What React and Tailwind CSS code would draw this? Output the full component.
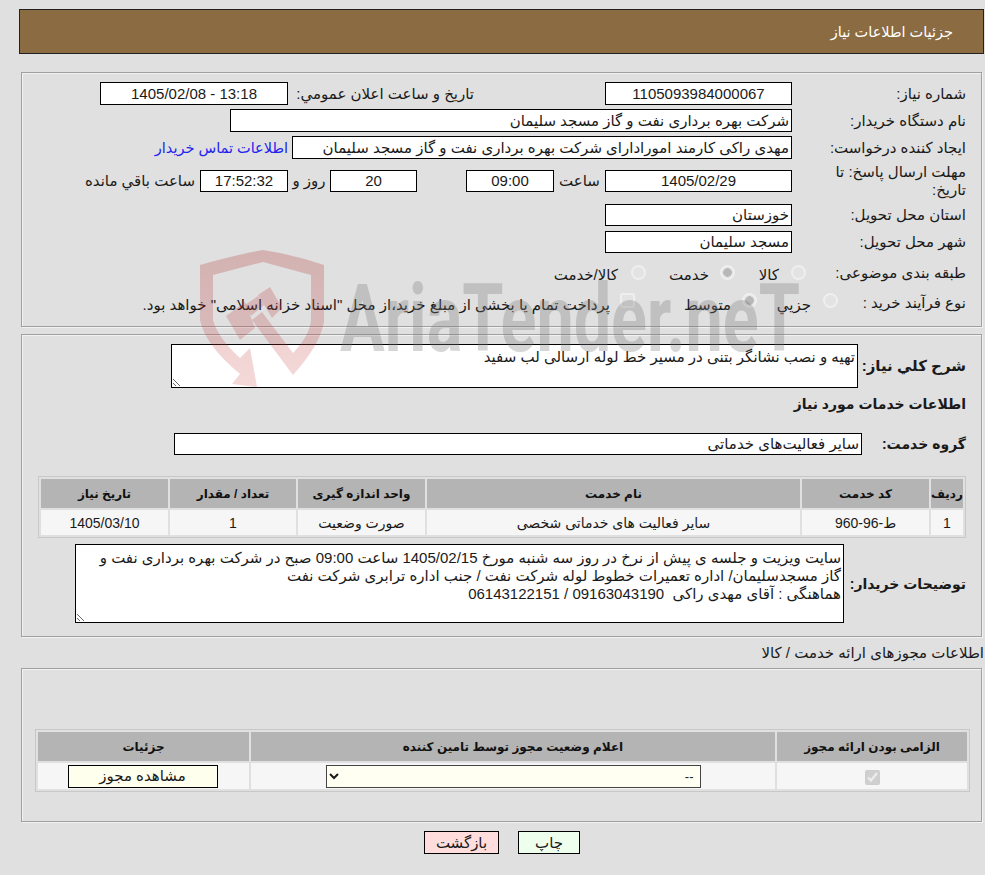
import React from 'react';

const Field = ({ className = '', children }) => (
  <div className={`flex h-full shrink-0 items-center border border-black bg-white px-[2px] ${className}`}>{children}</div>
);

const Label = ({ className = '', children }) => (
  <div className={`shrink-0 ${className}`}>{children}</div>
);

const radioClass = "m-0 -mt-[6px] h-[15px] w-[15px] appearance-none rounded-full border-2 border-[#efefef] bg-[#e3e3e3] checked:bg-[radial-gradient(circle,#b8b8b8_52%,#e3e3e3_58%)]";
const radioLowClass = "m-0 -mt-[10px] h-[15px] w-[15px] appearance-none rounded-full border-2 border-[#efefef] bg-[#e3e3e3] checked:bg-[radial-gradient(circle,#b8b8b8_52%,#e3e3e3_58%)]";

function Watermark() {
  return (
    <svg className="absolute left-0 top-0 pointer-events-none" width="985" height="875" viewBox="0 0 985 875">
      <defs>
        <linearGradient id="shieldFade" x1="0" y1="250" x2="0" y2="387" gradientUnits="userSpaceOnUse">
          <stop offset="0" stopColor="#b23a3a" stopOpacity="0.28" />
          <stop offset="1" stopColor="#c83c3c" stopOpacity="0.2" />
        </linearGradient>
      </defs>
      <g fill="url(#shieldFade)">
        <path d="M200 265 Q235 255 263 250 Q295 255 324 265 L324 322 Q320 345 293 375 L252 320 L262 312 L293 353 Q310 335 311 320 L311 275 Q285 268 263 262 Q240 268 213 275 L213 320 Q218 338 240 358 L250 348 L257 387 L232 384 L240 374 Q205 345 200 320 Z" />
        <path d="M258 295 L270 287 L282 308 L272 318 Z" />
        <path d="M226 316 L245 302 L255 328 L240 340 Z" />
        <path d="M245 305 L258 296 L264 305 L251 316 Z" />
      </g>
      <text x="340" y="351" direction="ltr" textAnchor="start" fontFamily="Roboto, sans-serif" fontWeight="700" fontSize="94" textLength="460" lengthAdjust="spacingAndGlyphs" fill="#777" fillOpacity="0.3">AriaTender.neT</text>
    </svg>
  );
}

const thClass = 'bg-[#b4b4b4] font-bold text-[12px] text-[#111] text-center';
const tdClass = 'bg-[#f6f6f6] text-center text-[14px]';
const panelShadow = 'shadow-[1px_1px_0_#f2f2f2,inset_1px_1px_0_#f2f2f2]';

export default function App() {
  return (
    <div dir="rtl" className="relative h-[875px] overflow-hidden bg-[#e0e0e0] pt-[9px] text-[15px] leading-[18px] text-[#1a1a1a] font-['Liberation_Sans','DejaVu_Sans',sans-serif]">
      <div className="ml-[19px] mr-px flex h-[45px] items-center border border-[#222] bg-[#8b6b41] pr-[30px] text-[14.5px] text-white">
        جزئیات اطلاعات نیاز
      </div>

      {/* main info */}
      <div className={`ml-[21px] mr-[3px] mt-[18px] h-[255px] border border-[#a0a0a0] pt-[9px] pr-[15px] ${panelShadow}`}>
        <div className="flex h-[23px] items-center">
          <Label className="w-[174px]">شماره نیاز:</Label>
          <Field className="w-[187px] justify-center">1105093984000067</Field>
          <Label className="mr-[131px] w-[186px]">تاریخ و ساعت اعلان عمومي:</Label>
          <Field className="w-[188px] justify-center">13:18 - 1405/02/08</Field>
        </div>
        <div className="mt-[4px] flex h-[23px] items-center">
          <Label className="w-[174px]">نام دستگاه خریدار:</Label>
          <Field className="w-[562px]">شرکت بهره برداری نفت و گاز مسجد سلیمان</Field>
        </div>
        <div className="mt-[4px] flex h-[23px] items-center">
          <Label className="w-[174px]">ایجاد کننده درخواست:</Label>
          <Field className="w-[500px]">مهدی راکی کارمند امورادارای شرکت بهره برداری نفت و گاز مسجد سلیمان</Field>
          <a className="mr-[4px] text-[14.5px] text-[#2222ee]">اطلاعات تماس خریدار</a>
        </div>
        <div className="mt-[11px] flex h-[22px] items-center">
          <Label className="w-[174px] pl-[36px]">مهلت ارسال پاسخ: تا تاریخ:</Label>
          <Field className="w-[187px] justify-center">1405/02/29</Field>
          <div className="w-[51px] shrink-0 text-center">ساعت</div>
          <Field className="w-[88px] justify-center">09:00</Field>
          <Field className="mr-[49px] w-[87px] justify-center">20</Field>
          <div className="w-[42px] shrink-0 text-center">روز و</div>
          <Field className="w-[88px] justify-center bg-[#fffff0]">17:52:32</Field>
          <div className="mr-[5px] shrink-0">ساعت باقي مانده</div>
        </div>
        <div className="mt-[12px] flex h-[22px] items-center">
          <Label className="w-[174px]">استان محل تحویل:</Label>
          <Field className="w-[187px]">خوزستان</Field>
        </div>
        <div className="mt-[5px] flex h-[22px] items-center">
          <Label className="w-[174px]">شهر محل تحویل:</Label>
          <Field className="w-[187px]">مسجد سلیمان</Field>
        </div>
        <div className="mt-[11px] flex h-[22px] items-center">
          <Label className="-mt-[4px] w-[160px]">طبقه بندی موضوعی:</Label>
          <div className="flex w-[71px] items-center gap-[12px]">
            <input type="radio" disabled className={radioClass} />
            <span>کالا</span>
          </div>
          <div className="flex w-[89px] items-center gap-[11px]">
            <input type="radio" disabled defaultChecked className={radioClass} />
            <span>خدمت</span>
          </div>
          <div className="flex items-center gap-[13px]">
            <input type="radio" disabled className={radioClass} />
            <span>کالا/خدمت</span>
          </div>
        </div>
        <div className="mt-[8px] flex h-[22px] items-center">
          <Label className="-mt-[4px] w-[128px]">نوع فرآیند خرید :</Label>
          <div className="flex w-[81px] items-center gap-[12px]">
            <input type="radio" disabled className={radioLowClass} />
            <span>جزیي</span>
          </div>
          <div className="flex w-[122px] items-center gap-[11px]">
            <input type="radio" disabled defaultChecked className={radioLowClass} />
            <span>متوسط</span>
          </div>
          <div className="flex items-center gap-[10px]">
            <input type="checkbox" disabled className="m-0 -mt-[10px] h-[15px] w-[15px] appearance-none rounded-[3px] border-2 border-[#efefef] bg-[#e3e3e3]" />
            <span className="whitespace-nowrap">پرداخت تمام یا بخشی از مبلغ خرید،از محل "اسناد خزانه اسلامی" خواهد بود.</span>
          </div>
        </div>
      </div>

      {/* need description */}
      <div className={`ml-[21px] mr-[3px] mt-[7px] h-[303px] border border-[#a0a0a0] pr-[15px] pt-[9px] ${panelShadow}`}>
        <div className="flex items-center">
          <div className="w-[108px] shrink-0 font-bold">شرح کلي نیاز:</div>
          <textarea readOnly defaultValue="تهیه و نصب نشانگر بتنی در مسیر خط لوله ارسالی لب سفید" className="h-[44px] w-[687px] resize overflow-hidden border border-black bg-white px-[2px] pt-[3px] outline-none" />
        </div>
        <div className="mt-[7px] text-[14px] font-bold">اطلاعات خدمات مورد نیاز</div>
        <div className="mt-[20px] flex items-center">
          <div className="w-[104px] shrink-0 text-[14px] font-bold">گروه خدمت:</div>
          <Field className="!h-[22px] w-[688px]">سایر فعالیت‌های خدماتی</Field>
        </div>
        <table className="mt-[21px] w-[928px] table-fixed border-separate border-spacing-[2px] border border-[#c8c8c8]">
          <colgroup>
            <col className="w-[32px]" />
            <col className="w-[127px]" />
            <col className="w-[373px]" />
            <col className="w-[127px]" />
            <col className="w-[126px]" />
            <col className="w-[127px]" />
          </colgroup>
          <thead>
            <tr className="h-[29px]">
              <th className={thClass}>ردیف</th>
              <th className={thClass}>کد خدمت</th>
              <th className={thClass}>نام خدمت</th>
              <th className={thClass}>واحد اندازه گیری</th>
              <th className={thClass}>تعداد / مقدار</th>
              <th className={thClass}>تاریخ نیاز</th>
            </tr>
          </thead>
          <tbody>
            <tr className="h-[25px]">
              <td className={tdClass}>1</td>
              <td className={tdClass}>ط-96-960</td>
              <td className={tdClass}>سایر فعالیت های خدماتی شخصی</td>
              <td className={tdClass}>صورت وضعیت</td>
              <td className={tdClass}>1</td>
              <td className={tdClass}>1405/03/10</td>
            </tr>
          </tbody>
        </table>
        <div className="mt-[6px] flex items-center">
          <div className="w-[122px] shrink-0 whitespace-nowrap text-[14px] font-bold">توضیحات خریدار:</div>
          <textarea
            readOnly
            defaultValue={'سایت ویزیت و جلسه ی پیش از نرخ در روز سه شنبه مورخ 1405/02/15 ساعت 09:00 صبح در شرکت بهره برداری نفت و\nگاز مسجدسلیمان/ اداره تعمیرات خطوط لوله شرکت نفت / جنب اداره ترابری شرکت نفت\nهماهنگی : آقای مهدی راکی  09163043190 / 06143122151'}
            className="h-[79px] w-[769px] resize overflow-hidden whitespace-pre border border-black bg-white px-[2px] pt-[4px] outline-none"
          />
        </div>
      </div>

      <div className="mr-px mt-[7px] h-[18px]">اطلاعات مجوزهای ارائه خدمت / کالا</div>

      {/* permits */}
      <div className={`ml-[21px] mr-[3px] mt-[6px] h-[154px] border border-[#a0a0a0] pr-[11px] pt-[60px] ${panelShadow}`}>
        <table className="w-[935px] table-fixed border-separate border-spacing-[2px] border border-[#c8c8c8]">
          <colgroup>
            <col className="w-[190px]" />
            <col className="w-[524px]" />
            <col className="w-[211px]" />
          </colgroup>
          <thead>
            <tr className="h-[29px]">
              <th className={thClass}>الزامی بودن ارائه مجوز</th>
              <th className={thClass}>اعلام وضعیت مجوز توسط تامین کننده</th>
              <th className={thClass}>جزئیات</th>
            </tr>
          </thead>
          <tbody>
            <tr className="h-[26px]">
              <td className={tdClass}>
                <input type="checkbox" disabled defaultChecked className="m-0 h-[15px] w-[15px] align-middle" />
              </td>
              <td className={tdClass}>
                <select className="mx-auto block h-[23px] w-[375px] border border-[#444] bg-[#fffff2] px-[2px] text-[13px]">
                  <option>--</option>
                </select>
              </td>
              <td className={tdClass}>
                <button className="mr-[2px] h-[23px] w-[150px] border border-black bg-[#ffffee] text-[15px]">مشاهده مجوز</button>
              </td>
            </tr>
          </tbody>
        </table>
      </div>

      <div className="mt-[9px] flex h-[23px] justify-center gap-[19px] pl-[19px]">
        <button className="h-[23px] w-[62px] border border-black bg-[#eeffee]">چاپ</button>
        <button className="h-[23px] w-[75px] border border-black bg-[#ffdddd]">بازگشت</button>
      </div>

      <Watermark />
    </div>
  );
}
